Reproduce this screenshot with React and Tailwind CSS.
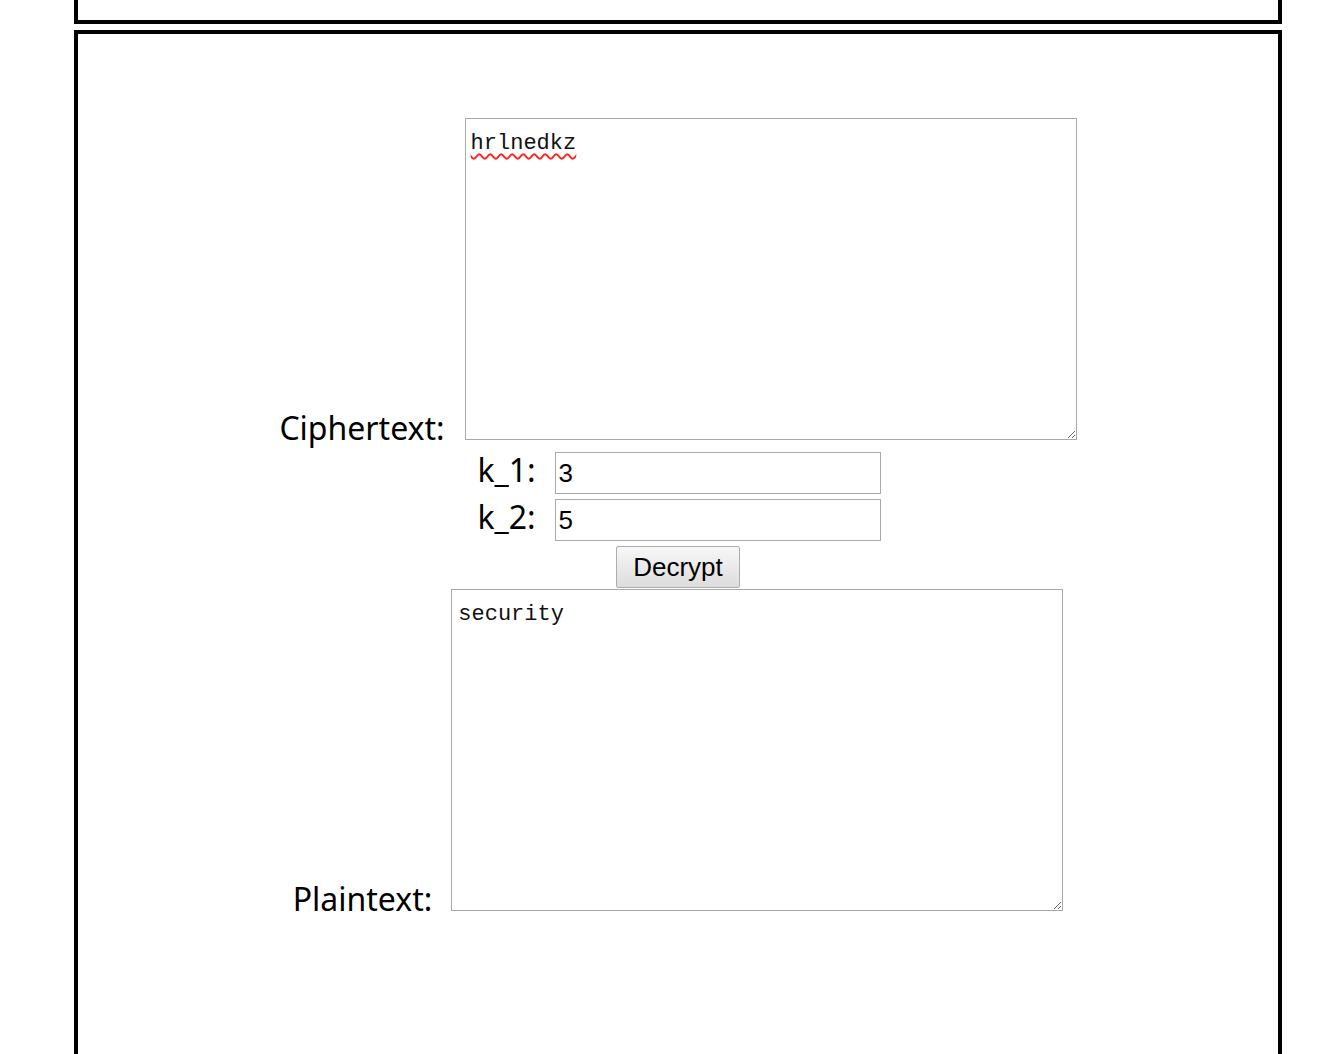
import React from "react";

const labelFont = { fontFamily: '"Noto Sans", "Open Sans", sans-serif' };
const monoFont = { fontFamily: '"Liberation Mono", "DejaVu Sans Mono", monospace' };
const uiFont = { fontFamily: '"Liberation Sans", Arial, sans-serif' };

function App() {
  return (
    <div className="bg-white min-h-screen overflow-hidden">
      <div className="ml-[74px] w-[1208px]">
        <div className="h-[24px] border-x-4 border-b-4 border-black" />

        <div className="mt-[6px] h-[1060px] border-4 border-black">
          <div
            className="flex flex-col items-center pt-[84px] text-black"
            style={labelFont}
          >
            <div className="flex items-end gap-[20px]">
              <span className="text-[32px] leading-none mb-[-4px]">
                Ciphertext:
              </span>
              <textarea
                defaultValue="hrlnedkz"
                className="w-[612px] h-[322px] border border-[#a9a9a9] px-[5px] pt-[12px] text-[22px] leading-[26px] text-[#111] underline decoration-wavy decoration-[#ff2020] decoration-[1.5px] underline-offset-[4px] outline-none"
                style={monoFont}
              />
            </div>

            <div className="mt-[12px] flex items-baseline gap-[19px] pl-[2px]">
              <span className="text-[32px] leading-none">k_1:</span>
              <input
                defaultValue="3"
                className="w-[326px] h-[42px] border border-[#a9a9a9] px-[3px] pt-[1px] text-[26px] outline-none"
                style={uiFont}
              />
            </div>

            <div className="mt-[5px] flex items-baseline gap-[19px] pl-[2px]">
              <span className="text-[32px] leading-none">k_2:</span>
              <input
                defaultValue="5"
                className="w-[326px] h-[42px] border border-[#a9a9a9] px-[3px] pt-[1px] text-[26px] outline-none"
                style={uiFont}
              />
            </div>

            <button
              type="button"
              className="mt-[5px] w-[124px] h-[42px] rounded-[2px] border border-[#adadad] bg-gradient-to-b from-[#f7f7f7] to-[#dddddd] text-[26px] text-black"
              style={uiFont}
            >
              Decrypt
            </button>

            <div className="mt-[1px] flex items-end gap-[19px]">
              <span className="text-[32px] leading-none mb-[-4px]">
                Plaintext:
              </span>
              <textarea
                defaultValue="security"
                className="w-[612px] h-[322px] border border-[#a9a9a9] px-[6px] pt-[12px] text-[22px] leading-[26px] text-[#111] outline-none"
                style={monoFont}
              />
            </div>
          </div>
        </div>
      </div>
    </div>
  );
}

export default App;
